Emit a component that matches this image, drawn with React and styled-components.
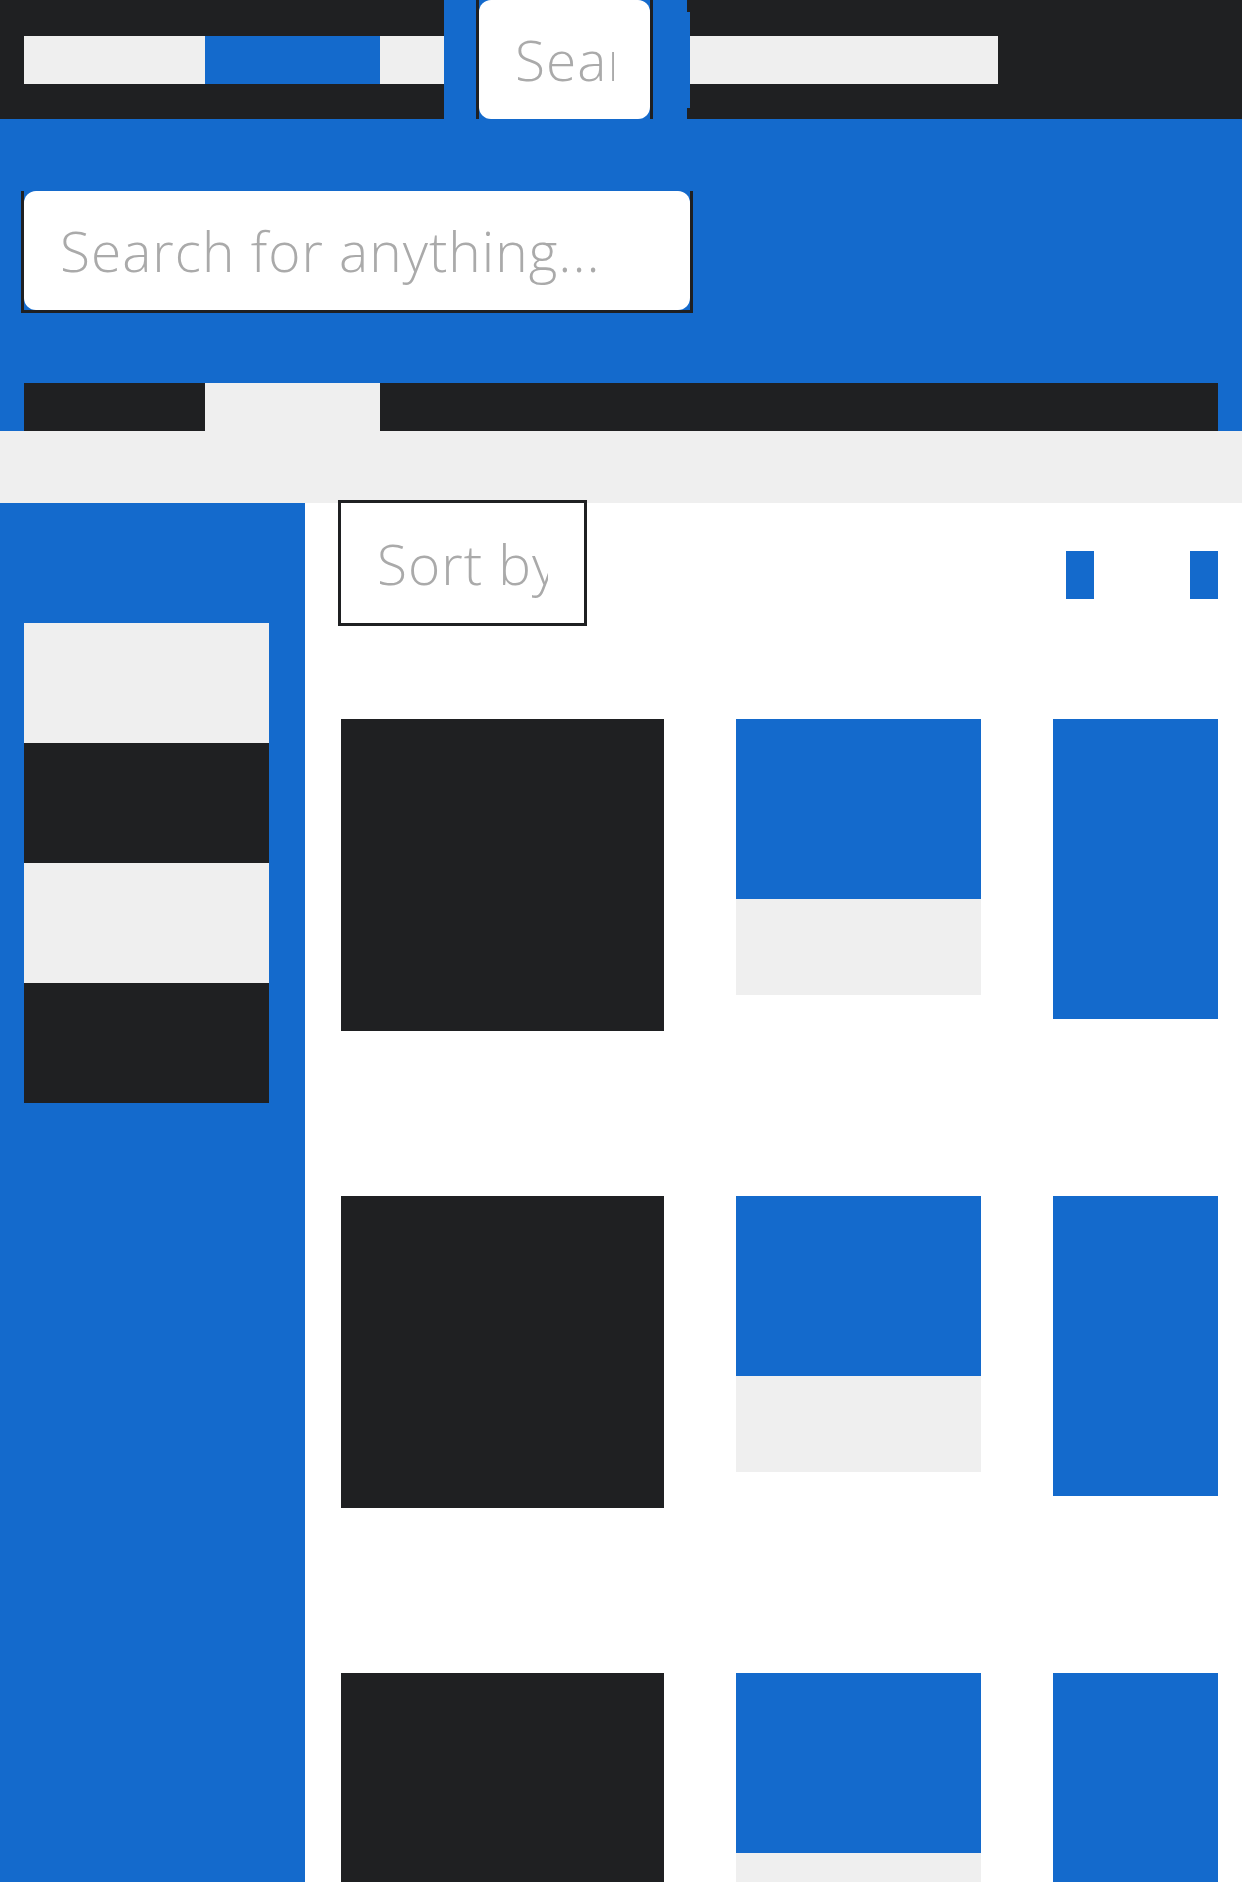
import React from "react";
import styled, { createGlobalStyle } from "styled-components";

const DARK = "#1f2022";
const BLUE = "#146acc";
const LIGHT = "#efefef";
const FONT = `"Open Sans", "Noto Sans", Lato, "Liberation Sans", sans-serif`;

const GlobalStyle = createGlobalStyle`
  html, body { margin: 0; padding: 0; background: #ffffff; }
  body { font-family: ${FONT}; }
  * { box-sizing: border-box; }
`;

const Page = styled.div`
  width: 1242px;
  min-height: 1882px;
  display: flex;
  flex-direction: column;
  overflow: hidden;
`;

const TopBar = styled.header`
  height: 119px;
  background: ${DARK};
  display: flex;
  align-items: center;
  padding-left: 24px;
`;

const Strip = styled.div`
  display: flex;
  height: 48px;
`;

const Segment = styled.div`
  width: ${(p) => p.$w}px;
  height: 100%;
  background: ${(p) => p.$bg};
`;

const SearchSlot = styled.div`
  align-self: stretch;
  background: ${BLUE};
  padding: 0 34px 0 32px;
  display: flex;
`;

const Notch = styled.div`
  width: 3px;
  height: 96px;
  background: ${BLUE};
`;

const SideFrame = styled.div`
  display: flex;
  border-left: 3px solid ${DARK};
  border-right: 3px solid ${DARK};
  border-bottom: ${(p) => (p.$bottom ? `3px solid ${DARK}` : "none")};
  align-self: flex-start;
`;

const Field = styled.input`
  display: block;
  width: ${(p) => p.$w}px;
  height: ${(p) => p.$h}px;
  padding: 0 36px;
  border: none;
  outline: none;
  background: #ffffff;
  border-radius: ${(p) => p.$r}px;
  font-family: ${FONT};
  font-weight: 300;
  font-size: 55px;
  letter-spacing: 1px;
  color: #555;
  &::placeholder {
    color: #aaaaaa;
    opacity: 1;
  }
`;

const Hero = styled.section`
  background: ${BLUE};
  padding: 72px 24px 0;
  display: flex;
  flex-direction: column;
`;

const HeroSearch = styled(SideFrame)`
  margin-left: -3px;
`;

const TabBar = styled.div`
  margin-top: 70px;
  height: 48px;
  display: flex;
  background: ${DARK};
`;

const Band = styled.div`
  height: 72px;
  background: ${LIGHT};
`;

const Body = styled.div`
  flex: 1;
  display: flex;
`;

const Sidebar = styled.aside`
  width: 305px;
  flex-shrink: 0;
  background: ${BLUE};
  padding: 120px 36px 0 24px;
  display: flex;
  flex-direction: column;
`;

const SideBlock = styled.div`
  height: 120px;
  background: ${(p) => (p.$dark ? DARK : LIGHT)};
`;

const Main = styled.main`
  flex: 1;
  padding: 0 24px 0 36px;
  display: flex;
  flex-direction: column;
`;

const Toolbar = styled.div`
  display: flex;
  justify-content: space-between;
  align-items: flex-start;
  margin-top: -3px;
`;

const SortFrame = styled.div`
  margin-left: -3px;
  border: 3px solid ${DARK};
  display: flex;
`;

const ViewToggles = styled.div`
  display: flex;
  gap: 96px;
  padding-top: 51px;
`;

const Toggle = styled.div`
  width: 28px;
  height: 48px;
  background: ${BLUE};
`;

const Grid = styled.div`
  margin-top: 93px;
  display: grid;
  grid-template-columns: 323px 245px 165px;
  column-gap: 72px;
  row-gap: 165px;
  align-items: start;
`;

const ImageCard = styled.div`
  height: ${(p) => p.$h}px;
  background: ${(p) => p.$bg};
`;

const InfoCard = styled.div`
  display: flex;
  flex-direction: column;
`;

const InfoTop = styled.div`
  height: 180px;
  background: ${BLUE};
`;

const InfoBottom = styled.div`
  height: 96px;
  background: ${LIGHT};
`;

export default function App() {
  const rows = [0, 1, 2];
  return (
    <Page>
      <GlobalStyle />
      <TopBar>
        <Strip>
          <Segment $w={181} $bg={LIGHT} />
          <Segment $w={175} $bg={BLUE} />
          <Segment $w={64} $bg={LIGHT} />
        </Strip>
        <SearchSlot>
          <SideFrame>
            <Field $w={171} $h={119} $r={12} placeholder="Search" />
          </SideFrame>
        </SearchSlot>
        <Notch />
        <Strip>
          <Segment $w={308} $bg={LIGHT} />
        </Strip>
      </TopBar>
      <Hero>
        <HeroSearch $bottom>
          <Field $w={666} $h={119} $r={12} placeholder="Search for anything..." />
        </HeroSearch>
        <TabBar>
          <Segment $w={181} $bg={DARK} />
          <Segment $w={175} $bg={LIGHT} />
        </TabBar>
      </Hero>
      <Band />
      <Body>
        <Sidebar>
          <SideBlock />
          <SideBlock $dark />
          <SideBlock />
          <SideBlock $dark />
        </Sidebar>
        <Main>
          <Toolbar>
            <SortFrame>
              <Field $w={243} $h={120} $r={0} placeholder="Sort by" />
            </SortFrame>
            <ViewToggles>
              <Toggle />
              <Toggle />
            </ViewToggles>
          </Toolbar>
          <Grid>
            {rows.map((r) => (
              <React.Fragment key={r}>
                <ImageCard $h={312} $bg={DARK} />
                <InfoCard>
                  <InfoTop />
                  <InfoBottom />
                </InfoCard>
                <ImageCard $h={300} $bg={BLUE} />
              </React.Fragment>
            ))}
          </Grid>
        </Main>
      </Body>
    </Page>
  );
}
